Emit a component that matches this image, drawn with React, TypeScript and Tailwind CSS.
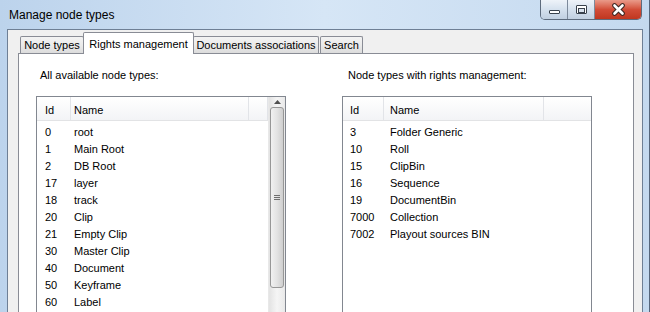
import React from 'react';

const allTypes: [string, string][] = [
  ['0', 'root'],
  ['1', 'Main Root'],
  ['2', 'DB Root'],
  ['17', 'layer'],
  ['18', 'track'],
  ['20', 'Clip'],
  ['21', 'Empty Clip'],
  ['30', 'Master Clip'],
  ['40', 'Document'],
  ['50', 'Keyframe'],
  ['60', 'Label'],
];

const rightsTypes: [string, string][] = [
  ['3', 'Folder Generic'],
  ['10', 'Roll'],
  ['15', 'ClipBin'],
  ['16', 'Sequence'],
  ['19', 'DocumentBin'],
  ['7000', 'Collection'],
  ['7002', 'Playout sources BIN'],
];

function TitleButtons() {
  return (
    <div className="flex h-[20px] self-start mr-[7px] border border-t-0 border-[#5d6b7d] rounded-b-[5px] overflow-hidden">
      <div className="w-[27px] h-full flex items-center justify-center bg-gradient-to-b from-[#eef3f9] via-[#d5e1ee] to-[#c1d0e1] border-r border-[#7d8a9b]">
        <div className="w-[11px] h-[4px] mt-[5px] bg-white border border-[#39424d] rounded-[1px]" />
      </div>
      <div className="w-[27px] h-full flex items-center justify-center bg-gradient-to-b from-[#eef3f9] via-[#d5e1ee] to-[#c1d0e1] border-r border-[#7d8a9b]">
        <div className="w-[11px] h-[9px] border border-[#39424d] bg-white flex items-center justify-center rounded-[1px]">
          <div className="w-[7px] h-[5px] border border-[#39424d] bg-[#d9e3ee] mt-[1px]" />
        </div>
      </div>
      <div className="w-[46px] h-full flex items-center justify-center bg-gradient-to-b from-[#e99a8a] via-[#d24d38] to-[#c0361f]">
        <svg width="15" height="13" viewBox="0 0 15 13">
          <path d="M3.5 2.5 L11.5 10.5 M11.5 2.5 L3.5 10.5" stroke="#3a2520" strokeWidth="4.6" strokeLinecap="round" />
          <path d="M3.5 2.5 L11.5 10.5 M11.5 2.5 L3.5 10.5" stroke="#ffffff" strokeWidth="2.6" strokeLinecap="round" />
        </svg>
      </div>
    </div>
  );
}

function Tab({ label, w, selected }: { label: string; w: string; selected?: boolean }) {
  if (selected) {
    return (
      <div className={`${w} h-[22px] -mb-px -mx-px relative z-10 bg-white border border-b-0 border-[#898c95] rounded-t-[2px] flex items-start justify-center pt-[3px]`}>
        {label}
      </div>
    );
  }
  return (
    <div className={`${w} h-[17px] bg-gradient-to-b from-[#f3f3f3] via-[#ebebeb] to-[#dcdcdc] border border-b-0 border-[#898c95] rounded-t-[2px] flex items-center justify-center pt-[1px]`}>
      {label}
    </div>
  );
}

function Scrollbar() {
  return (
    <div className="w-[17px] h-full flex flex-col bg-gradient-to-r from-[#e3e3e3] via-[#f5f5f5] to-[#e9e9e9] border-l border-[#e8e8e8]">
      <div className="h-[10px] flex items-center justify-center shrink-0">
        <svg width="7" height="4" viewBox="0 0 7 4">
          <path d="M0 4 L3.5 0 L7 4 Z" fill="#505050" />
        </svg>
      </div>
      <div className="mx-[1px] h-[181px] shrink-0 rounded-[3px] border border-[#979797] bg-gradient-to-r from-[#f1f1f1] via-[#e3e3e3] to-[#cfcfcf] flex items-center justify-center">
        <div className="flex flex-col gap-[1px]">
          <div className="w-[6px] h-px bg-[#6f6f6f]" />
          <div className="w-[6px] h-px bg-[#6f6f6f]" />
          <div className="w-[6px] h-px bg-[#6f6f6f]" />
        </div>
      </div>
    </div>
  );
}

function ListView({
  rows,
  idW,
  idPad,
  nameW,
  namePad,
  scroll,
}: {
  rows: [string, string][];
  idW: string;
  idPad: string;
  nameW: string;
  namePad: string;
  scroll?: boolean;
}) {
  return (
    <div className="w-[250px] h-[230px] border border-[#828790] bg-white flex">
      <div className="flex-1 flex flex-col">
        <div className="h-[24px] shrink-0 flex bg-gradient-to-b from-white to-[#f3f4f6] border-b border-[#e2e3e5]">
          <div className={`${idW} ${idPad} h-full flex items-center pt-[3px] border-r border-[#e2e4e8]`}>Id</div>
          <div className={`${nameW} ${namePad} h-full flex items-center pt-[3px] border-r border-[#e2e4e8]`}>Name</div>
          <div className={`flex-1 h-full ${scroll ? 'border-r border-[#e2e4e8]' : ''}`} />
        </div>
        <div className="pt-[3px] flex flex-col">
          {rows.map(([id, name]) => (
            <div key={id} className="h-[17px] shrink-0 flex items-center">
              <div className={`${idW} ${idPad}`}>{id}</div>
              <div className={`${namePad} pl-[1px]`}>{name}</div>
            </div>
          ))}
        </div>
      </div>
      {scroll && <Scrollbar />}
    </div>
  );
}

export default function App() {
  return (
    <div className="w-[650px] h-[312px] overflow-hidden flex flex-col bg-gradient-to-r from-[#bcd3ec] via-[#d6e6f6] to-[#c4d9ef] text-[11px] text-black font-['Liberation_Sans',Arial,sans-serif] border-r border-[#55667c]">
      <div className="h-[29px] shrink-0 flex items-center justify-between">
        <span className="pl-[9px] text-[12px]">Manage node types</span>
        <TitleButtons />
      </div>

      <div className="h-[300px] shrink-0 ml-[7px] mr-[6px] bg-[#f0f0f0] border border-b-0 border-[#6e7f95] pl-[10px] pr-[8px] pt-[2px]">
        <div className="h-[21px] flex items-end pl-[2px]">
          <Tab label="Node types" w="w-[64px]" />
          <Tab label="Rights management" w="w-[111px]" selected />
          <Tab label="Documents associations" w="w-[126px]" />
          <div className="ml-[1px]">
            <Tab label="Search" w="w-[43px]" />
          </div>
        </div>

        <div className="h-[300px] bg-white border border-[#898c95] pl-[17px] pt-[14px] flex gap-[56px]">
          <div className="flex flex-col">
            <div className="pl-[4px] h-[15px] leading-[15px]">All available node types:</div>
            <div className="mt-[13px]">
              <ListView rows={allTypes} idW="w-[34px]" idPad="pl-[8px]" nameW="w-[178px]" namePad="pl-[3px]" scroll />
            </div>
          </div>
          <div className="flex flex-col">
            <div className="pl-[6px] h-[15px] leading-[15px]">Node types with rights management:</div>
            <div className="mt-[13px]">
              <ListView rows={rightsTypes} idW="w-[41px]" idPad="pl-[7px]" nameW="w-[160px]" namePad="pl-[6px]" />
            </div>
          </div>
        </div>
      </div>
    </div>
  );
}
